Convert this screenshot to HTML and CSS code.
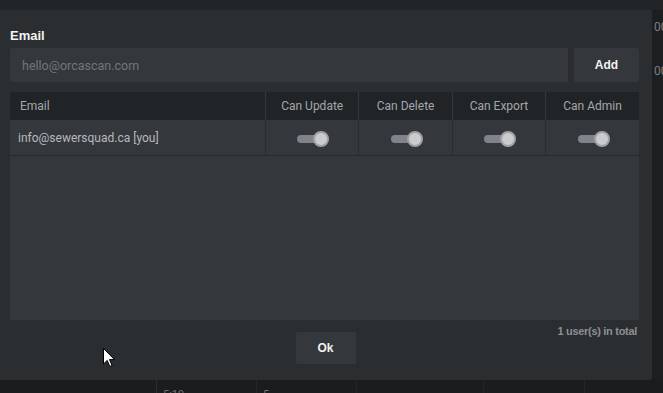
FILE: index.html
```html
<!DOCTYPE html>
<html lang="en">
<head>
    <meta charset="UTF-8">
    <title>Share sheet</title>
    <link rel="stylesheet" href="styles.css">
</head>
<body>
    <div class="screen">
        <div class="topbar"></div>
        <div class="middle">
            <div class="modal">
                <label class="field-label" for="email">Email</label>
                <div class="add-row">
                    <input type="text" id="email" placeholder="hello@orcascan.com">
                    <button class="btn add-btn">Add</button>
                </div>

                <div class="users">
                    <table>
                        <thead>
                            <tr>
                                <th class="col-email">Email</th>
                                <th>Can Update</th>
                                <th>Can Delete</th>
                                <th>Can Export</th>
                                <th>Can Admin</th>
                            </tr>
                        </thead>
                        <tbody>
                            <tr>
                                <td class="col-email">info@sewersquad.ca [you]</td>
                                <td><span class="toggle"></span></td>
                                <td><span class="toggle"></span></td>
                                <td><span class="toggle"></span></td>
                                <td><span class="toggle"></span></td>
                            </tr>
                        </tbody>
                    </table>
                </div>

                <div class="footer">
                    <div class="total">1 user(s) in total</div>
                    <button class="btn ok-btn">Ok</button>
                </div>

                <svg class="cursor" width="12" height="20" viewBox="0 0 12 20">
                    <path d="M0.5 0.5 L0.5 16 L4.2 12.4 L6.8 18.5 L9 17.5 L6.5 11.6 L11.5 11.6 Z" fill="#fff" stroke="#000" stroke-width="1"/>
                </svg>
            </div>
            <div class="side">
                <span>00</span>
                <span>00</span>
            </div>
        </div>
        <div class="bottom">
            <div class="cell c1"></div>
            <div class="cell c2">5:19</div>
            <div class="cell c3">5</div>
            <div class="cell c4"></div>
            <div class="cell c5"></div>
            <div class="cell c6"></div>
        </div>
    </div>
</body>
</html>
```

FILE: styles.css
```css
body {
    margin: 0;
    background-color: #1b1c1e;
    font-family: Roboto, "Liberation Sans", Arial, sans-serif;
    overflow: hidden;
}
.screen {
    width: 663px;
    height: 393px;
}
.topbar {
    height: 10px;
    background-color: #222528;
}
.middle {
    display: flex;
    height: 370px;
}
.modal {
    position: relative;
    width: 652px;
    box-sizing: border-box;
    padding: 18px 13px 0 10px;
    background-color: #2b2e31;
    border-radius: 0 0 3px 0;
}
.field-label {
    display: block;
    font-family: "Liberation Sans", Arial, sans-serif;
    font-weight: bold;
    font-size: 13px;
    color: #f2f2f2;
    margin-bottom: 5px;
}
.add-row {
    display: flex;
    height: 34px;
    margin-bottom: 10px;
}
.add-row input {
    flex: 1;
    border: none;
    border-right: 5px solid #2a2c2f;
    border-radius: 3px 0 0 3px;
    background-color: #34383c;
    padding: 0 12px;
    font-family: Roboto, sans-serif;
    font-size: 12.5px;
    color: #ddd;
    outline: none;
}
.add-row input::placeholder {
    color: #72767a;
}
.btn {
    border: none;
    background-color: #34383c;
    color: #f2f2f2;
    font-family: "Liberation Sans", Arial, sans-serif;
    font-weight: bold;
    font-size: 12px;
    cursor: pointer;
}
.add-btn {
    width: 65px;
    border-radius: 0 3px 3px 0;
    margin-left: 1px;
}
.users {
    height: 228px;
    background-color: #34383c;
}
table {
    width: 100%;
    border-collapse: collapse;
    table-layout: fixed;
}
th {
    height: 28px;
    background-color: #212427;
    color: #a3a7ab;
    font-weight: normal;
    font-size: 12px;
    text-align: center;
    border-left: 1px solid #34383c;
    padding: 0;
}
td {
    height: 35px;
    text-align: center;
    border-left: 1px solid #2a2d30;
    border-bottom: 1px solid #26292c;
    padding: 0;
}
th.col-email, td.col-email {
    width: 245px;
    text-align: left;
    padding-left: 10px;
    border-left: none;
}
td.col-email {
    width: 247px;
    padding-left: 8px;
    color: #b6b9bc;
    font-size: 12px;
}
.toggle {
    position: relative;
    display: inline-block;
    width: 26px;
    height: 8px;
    margin-right: 4px;
    border-radius: 4px;
    background-color: #80848a;
    vertical-align: middle;
}
.toggle::after {
    content: "";
    position: absolute;
    right: -6px;
    top: -4px;
    width: 12px;
    height: 12px;
    border-radius: 50%;
    background-color: #c9cbcd;
    border: 2px solid #9fa2a6;
}
.footer {
    position: relative;
    display: flex;
    justify-content: center;
    padding-top: 12px;
}
.total {
    position: absolute;
    right: 2px;
    top: 5px;
    font-family: "Liberation Sans", Arial, sans-serif;
    font-weight: bold;
    font-size: 11px;
    color: #8c9094;
    letter-spacing: -0.3px;
}
.ok-btn {
    width: 60px;
    height: 32px;
    border-radius: 2px;
    margin-left: 2px;
}
.cursor {
    position: absolute;
    left: 103px;
    top: 338px;
}
.side {
    flex: 1;
    display: flex;
    flex-direction: column;
    gap: 30px;
    padding: 10px 0 0 2px;
    overflow: hidden;
    background-color: #1c1e20;
    color: #7c7f82;
    font-size: 12px;
}
.bottom {
    display: flex;
    height: 13px;
    background-color: #1b1c1e;
    color: #6f7275;
    font-size: 11px;
    line-height: 13px;
    overflow: hidden;
}
.cell {
    box-sizing: border-box;
    padding: 8px 0 0 6px;
    border-right: 1px solid #232527;
}
.c1 { width: 157px; border-right-color: #2a2c2e; }
.c2 { width: 100px; }
.c3 { width: 100px; }
.c4 { width: 127px; }
.c5 { width: 101px; }
.c6 { flex: 1; border-right: none; }
```
